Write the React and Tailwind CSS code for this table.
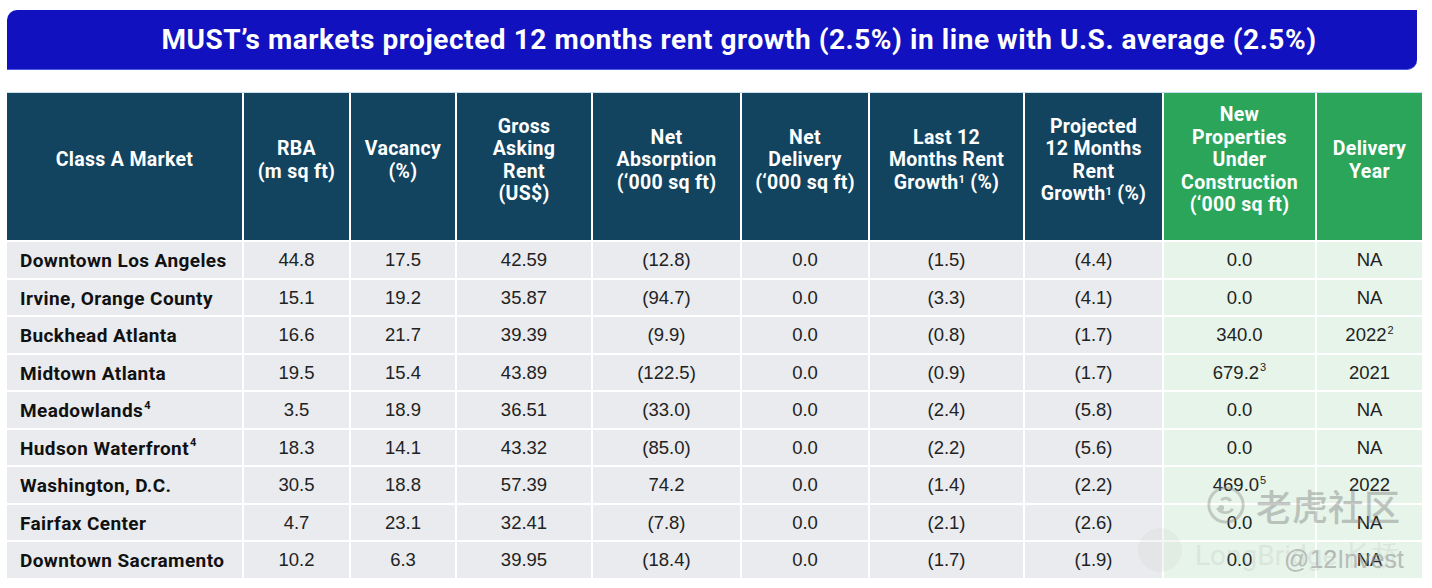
const cols = "grid-cols-[235px_105px_104px_134px_147px_126px_153px_137px_151px_105px]";

const headers = [
  ["Class A Market"],
  ["RBA", "(m sq ft)"],
  ["Vacancy", "(%)"],
  ["Gross", "Asking", "Rent", "(US$)"],
  ["Net", "Absorption", "(‘000 sq ft)"],
  ["Net", "Delivery", "(‘000 sq ft)"],
  ["Last 12", "Months Rent", <>Growth<sup className="text-[11px]">1</sup> (%)</>],
  ["Projected", "12 Months", "Rent", <>Growth<sup className="text-[11px]">1</sup> (%)</>],
  ["New", "Properties", "Under", "Construction", "(‘000 sq ft)"],
  ["Delivery", "Year"],
];

const rows = [
  ["Downtown Los Angeles", null, "44.8", "17.5", "42.59", "(12.8)", "0.0", "(1.5)", "(4.4)", ["0.0"], ["NA"]],
  ["Irvine, Orange County", null, "15.1", "19.2", "35.87", "(94.7)", "0.0", "(3.3)", "(4.1)", ["0.0"], ["NA"]],
  ["Buckhead Atlanta", null, "16.6", "21.7", "39.39", "(9.9)", "0.0", "(0.8)", "(1.7)", ["340.0"], ["2022", "2"]],
  ["Midtown Atlanta", null, "19.5", "15.4", "43.89", "(122.5)", "0.0", "(0.9)", "(1.7)", ["679.2", "3"], ["2021"]],
  ["Meadowlands", "4", "3.5", "18.9", "36.51", "(33.0)", "0.0", "(2.4)", "(5.8)", ["0.0"], ["NA"]],
  ["Hudson Waterfront", "4", "18.3", "14.1", "43.32", "(85.0)", "0.0", "(2.2)", "(5.6)", ["0.0"], ["NA"]],
  ["Washington, D.C.", null, "30.5", "18.8", "57.39", "74.2", "0.0", "(1.4)", "(2.2)", ["469.0", "5"], ["2022"]],
  ["Fairfax Center", null, "4.7", "23.1", "32.41", "(7.8)", "0.0", "(2.1)", "(2.6)", ["0.0"], ["NA"]],
  ["Downtown Sacramento", null, "10.2", "6.3", "39.95", "(18.4)", "0.0", "(1.7)", "(1.9)", ["0.0"], ["NA"]],
];

function Sup({ n }) {
  if (!n) return null;
  return <sup className="text-[11px] ml-[1px]">{n}</sup>;
}

export default function App() {
  return (
    <div className="w-[1432px] h-[588px] bg-white relative overflow-hidden font-['Roboto',sans-serif]">
      <div className="pl-[7px] pr-[15px] pt-[10px]">
        <div className="h-[60px] pl-[54px] bg-[#1111c0] rounded-tl-[10px] rounded-br-[10px] border-b border-[#4a5ae0] flex items-center justify-center">
          <h1 className="text-white font-bold text-[28px] tracking-[0.55px] pt-[1px]">
            MUST’s markets projected 12 months rent growth (2.5%) in line with U.S. average (2.5%)
          </h1>
        </div>
      </div>

      <div className={`ml-[7px] mt-[22px] w-[1415px] grid ${cols} gap-[2px] bg-white border-t border-[#c8e0ee]`}>
        {headers.map((h, i) => (
          <div
            key={i}
            className={`h-[147px] pb-[12px] flex flex-col items-center justify-center text-center text-white font-bold text-[19.5px] tracking-[0.3px] leading-[22.5px] ${i >= 8 ? "bg-[#2aa55a]" : "bg-[#12445f]"}`}
          >
            {h.map((line, j) => (
              <div key={j}>{line}</div>
            ))}
          </div>
        ))}

        {rows.map((r) => (
          <div key={r[0]} className="contents">
            <div className="h-[35.5px] bg-[#e9ebee] flex items-center pl-[13px] pt-[3px] font-bold text-[19px] tracking-[0.4px] text-[#111]">
              {r[0]}
              <Sup n={r[1]} />
            </div>
            {r.slice(2, 9).map((v, k) => (
              <div key={k} className="h-[35.5px] bg-[#e9ebee] flex items-center justify-center pt-[1px] text-[18.5px] text-[#222] font-['Liberation_Sans',sans-serif]">
                {v}
              </div>
            ))}
            {[r[9], r[10]].map((v, k) => (
              <div key={"g" + k} className="h-[35.5px] bg-[#e6f4e9] flex items-center justify-center pt-[1px] text-[18.5px] text-[#222] font-['Liberation_Sans',sans-serif]">
                {v[0]}
                <Sup n={v[1]} />
              </div>
            ))}
          </div>
        ))}
      </div>

      {/* watermark */}
      <div className="absolute left-[1206px] top-[485px] flex items-center gap-[10px] opacity-40 pointer-events-none">
        <svg width="40" height="40" viewBox="0 0 42 42" fill="none" stroke="#888" strokeWidth="3">
          <circle cx="21" cy="21" r="18" />
          <path d="M12 24c3 6 12 7 16 1M16 16c2-3 8-3 10 1" />
          <circle cx="16" cy="24" r="1.5" fill="#888" />
        </svg>
        <span className="text-[36px] text-[#777] font-['Noto_Sans_CJK_SC',sans-serif] font-medium leading-none">老虎社区</span>
      </div>
      <div className="absolute left-[1138px] top-[528px] w-[44px] h-[44px] rounded-full bg-[#ccc] opacity-20 pointer-events-none" />
      <div className="absolute left-[1195px] top-[535px] text-[28px] text-[#999] opacity-15 pointer-events-none">
        LongBridge 长桥
      </div>
      <div className="absolute left-[1284px] top-[541px] text-[25px] text-[#999] opacity-60 pointer-events-none font-['Liberation_Sans',sans-serif]">
        @12Invest
      </div>
    </div>
  );
}
